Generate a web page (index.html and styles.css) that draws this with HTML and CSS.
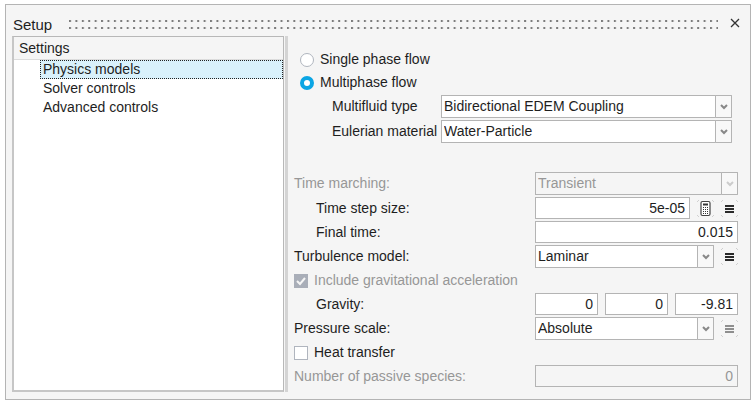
FILE: index.html
```html
<!DOCTYPE html>
<html lang="en">
<head>
  <meta charset="UTF-8" />
  <meta name="viewport" content="width=device-width, initial-scale=1.0" />
  <title>Setup</title>
  <link rel="stylesheet" href="styles.css">
</head>
<body>
  <div class="window">
    <header class="titlebar">
      <h1>Setup</h1>
      <svg class="grip" aria-hidden="true">
        <defs>
          <pattern id="dots" width="6.41" height="7" patternUnits="userSpaceOnUse">
            <rect width="2" height="2" fill="#7c7c7c"/>
          </pattern>
        </defs>
        <rect width="100%" height="100%" fill="url(#dots)"/>
      </svg>
      <button class="close" type="button" aria-label="Close">
        <svg width="10" height="10" viewBox="0 0 10 10"><path d="M1 1l8 8M9 1l-8 8" stroke="#333" stroke-width="1.3"/></svg>
      </button>
    </header>

    <div class="content">
      <nav class="sidebar">
        <h2>Settings</h2>
        <ul>
          <li><a class="selected" href="#physics">Physics models</a></li>
          <li><a href="#solver">Solver controls</a></li>
          <li><a href="#advanced">Advanced controls</a></li>
        </ul>
      </nav>

      <form class="settings" id="physics">
        <div class="phase">
          <label class="option"><input type="radio" name="phase">Single phase flow</label>
          <label class="option"><input type="radio" name="phase" checked>Multiphase flow</label>
          <div class="phase-row">
            <label for="multifluid">Multifluid type</label>
            <div class="select">
              <select id="multifluid"><option>Bidirectional EDEM Coupling</option></select>
              <span class="arrow"><svg width="8" height="6" viewBox="0 0 8 6"><path d="M1 1l3 3 3-3"/></svg></span>
            </div>
          </div>
          <div class="phase-row">
            <label for="material">Eulerian material</label>
            <div class="select">
              <select id="material"><option>Water-Particle</option></select>
              <span class="arrow"><svg width="8" height="6" viewBox="0 0 8 6"><path d="M1 1l3 3 3-3"/></svg></span>
            </div>
          </div>
        </div>

        <div class="fields">
          <div class="row disabled">
            <label for="marching">Time marching:</label>
            <div class="control">
              <div class="select">
                <select id="marching" disabled><option>Transient</option></select>
                <span class="arrow"><svg width="8" height="6" viewBox="0 0 8 6"><path d="M1 1l3 3 3-3"/></svg></span>
              </div>
            </div>
          </div>
          <div class="row">
            <label class="indent" for="step">Time step size:</label>
            <div class="control">
              <input class="number" id="step" type="text" value="5e-05">
              <button class="icon" type="button" aria-label="Time step calculator">
                <svg width="17" height="17" viewBox="0 0 17 17">
                  <path class="corners" d="M0 2l2-2M15 0l2 2M0 15l2 2M15 17l2-2"/>
                  <rect x="4" y="1.5" width="9" height="14" rx="1.5" fill="#fff" stroke="#444" stroke-width="1.2"/>
                  <path d="M6 4.5h5" stroke="#333" stroke-width="2"/>
                  <path d="M6 7.5h5M6 9.5h5M6 11.5h5M6 13.5h5" stroke="#333" stroke-dasharray="1 1"/>
                </svg>
              </button>
              <button class="icon" type="button" aria-label="Time step options">
                <svg width="17" height="17" viewBox="0 0 17 17">
                  <path class="corners" d="M0 2l2-2M15 0l2 2M0 15l2 2M15 17l2-2"/>
                  <path class="bars" d="M4 6h9M4 9h9M4 12h9"/>
                </svg>
              </button>
            </div>
          </div>
          <div class="row">
            <label class="indent" for="final">Final time:</label>
            <div class="control"><input class="number" id="final" type="text" value="0.015"></div>
          </div>
          <div class="row">
            <label for="turbulence">Turbulence model:</label>
            <div class="control">
              <div class="select">
                <select id="turbulence"><option>Laminar</option></select>
                <span class="arrow"><svg width="8" height="6" viewBox="0 0 8 6"><path d="M1 1l3 3 3-3"/></svg></span>
              </div>
              <button class="icon" type="button" aria-label="Turbulence options">
                <svg width="17" height="17" viewBox="0 0 17 17">
                  <path class="corners" d="M0 2l2-2M15 0l2 2M0 15l2 2M15 17l2-2"/>
                  <path class="bars" d="M4 6h9M4 9h9M4 12h9"/>
                </svg>
              </button>
            </div>
          </div>
          <label class="option disabled"><input type="checkbox" checked disabled>Include gravitational acceleration</label>
          <div class="row">
            <label class="indent" for="gravity-x">Gravity:</label>
            <div class="control">
              <input class="number" id="gravity-x" type="text" value="0">
              <input class="number" type="text" value="0" aria-label="Gravity Y">
              <input class="number" type="text" value="-9.81" aria-label="Gravity Z">
            </div>
          </div>
          <div class="row">
            <label for="pressure">Pressure scale:</label>
            <div class="control">
              <div class="select">
                <select id="pressure"><option>Absolute</option></select>
                <span class="arrow"><svg width="8" height="6" viewBox="0 0 8 6"><path d="M1 1l3 3 3-3"/></svg></span>
              </div>
              <button class="icon" type="button" aria-label="Pressure options" disabled>
                <svg width="17" height="17" viewBox="0 0 17 17">
                  <path class="corners" d="M0 2l2-2M15 0l2 2M0 15l2 2M15 17l2-2"/>
                  <path class="bars" d="M4 6h9M4 9h9M4 12h9"/>
                </svg>
              </button>
            </div>
          </div>
          <label class="option"><input type="checkbox">Heat transfer</label>
          <div class="row disabled">
            <label for="species">Number of passive species:</label>
            <div class="control"><input class="number" id="species" type="text" value="0" disabled></div>
          </div>
        </div>
      </form>
    </div>
  </div>
</body>
</html>
```

FILE: styles.css
```css
* {
  box-sizing: border-box;
}

body {
  margin: 0;
  padding: 4px 3px 3px 5px;
  min-height: 100vh;
  display: flex;
  background: #fff;
  color: #1e1e1e;
  font-family: "Liberation Sans", Arial, sans-serif;
  font-size: 14px;
  line-height: 19px;
}

h1,
h2,
ul {
  margin: 0;
  padding: 0;
  font-weight: normal;
}

input,
select,
button {
  margin: 0;
  font: inherit;
  color: inherit;
}

.window {
  flex: 1;
  min-width: 0;
  display: flex;
  flex-direction: column;
  padding: 0 10px 7px 6px;
  background: #f5f5f5;
  border: 1px solid #b4b4b4;
}

/* title bar */
.titlebar {
  display: flex;
  align-items: center;
  height: 31px;
  padding-top: 8px;
}

.titlebar h1 {
  width: 57px;
  padding-left: 1px;
  font-size: 15px;
}

.grip {
  flex: 1;
  min-width: 0;
  height: 9px;
}

.close {
  display: flex;
  margin-left: 12px;
  padding: 0 0 4px;
  border: none;
  background: none;
}

.content {
  flex: 1;
  display: flex;
  padding-right: 2px;
}

/* settings list */
.sidebar {
  flex: none;
  width: 272px;
  background: #fff;
  border: 1px solid #b8b8b8;
  border-left: 2px solid #c6c6c6;
  border-bottom: 2px solid #c6c6c6;
}

.sidebar h2 {
  height: 23px;
  padding: 2px 5px;
  font-size: 14px;
  background: #f5f5f5;
  border-bottom: 1px solid #dcdcdc;
}

.sidebar ul {
  list-style: none;
  padding-left: 26px;
}

.sidebar a {
  display: block;
  padding-left: 3px;
  color: inherit;
  text-decoration: none;
}

.sidebar .selected {
  padding-left: 2px;
  line-height: 17px;
  background: #d9f1fb;
  border: 1px dotted #222;
}

/* form */
.settings {
  flex: 1;
  min-width: 0;
  display: flex;
  flex-direction: column;
  gap: 29px;
  margin-left: 1px;
  padding: 13px 0 0 6px;
  border-left: 3px solid #d4d4d4;
}

.phase,
.fields {
  display: flex;
  flex-direction: column;
  gap: 2px;
}

.phase {
  padding: 0 6px;
}

.phase-row,
.row {
  display: flex;
  align-items: center;
}

.phase-row label {
  flex: none;
  width: 141px;
  padding-left: 32px;
  white-space: nowrap;
}

.row > label {
  flex: none;
  width: 241px;
}

.row > .indent {
  padding-left: 22px;
}

.control {
  flex: 1;
  min-width: 0;
  display: flex;
  align-items: center;
  gap: 7px;
}

.option {
  display: flex;
  align-items: center;
  gap: 6px;
  height: 21px;
}

.disabled {
  color: #979797;
}

.select {
  position: relative;
  flex: 1;
  min-width: 0;
  display: flex;
}

select {
  appearance: none;
  width: 100%;
  height: 23px;
  padding: 0 18px 0 2px;
  background: #fff;
  border: 1px solid #b4b4b4;
  border-radius: 0;
}

.arrow {
  position: absolute;
  top: 0;
  right: 0;
  bottom: 0;
  width: 17px;
  display: flex;
  align-items: center;
  justify-content: center;
  background: #f8f8f8;
  border: 1px solid #b4b4b4;
  border-radius: 1px;
  pointer-events: none;
}

.arrow path {
  fill: none;
  stroke: #888;
  stroke-width: 2;
}

.disabled .arrow path {
  stroke: #ccc;
}

.number {
  flex: 1;
  min-width: 0;
  height: 22px;
  padding: 0 4px;
  text-align: right;
  background: #fff;
  border: 1px solid #b4b4b4;
}

select:disabled,
.number:disabled {
  background: #f5f5f5;
  color: #979797;
  opacity: 1;
}

input[type="radio"],
input[type="checkbox"] {
  appearance: none;
  width: 14px;
  height: 14px;
  background: #fff;
  border: 1px solid #b0b5be;
}

input[type="radio"] {
  border-radius: 50%;
}

input[type="radio"]:checked {
  border: 4px solid #0ba5e4;
}

input[type="checkbox"]:checked {
  border: none;
  background: #a9aeb8 url("data:image/svg+xml,%3Csvg xmlns='http://www.w3.org/2000/svg' viewBox='0 0 14 14'%3E%3Cpath d='M3 7l3 3 5-6' fill='none' stroke='%23f5f5f5' stroke-width='2'/%3E%3C/svg%3E");
}

.icon {
  display: flex;
  padding: 0;
  border: none;
  background: none;
}

.corners {
  fill: none;
  stroke: #d0d0d0;
}

.bars {
  stroke: #2a2a2a;
  stroke-width: 2;
}

.icon:disabled .bars {
  stroke: #8e8e8e;
}
```
